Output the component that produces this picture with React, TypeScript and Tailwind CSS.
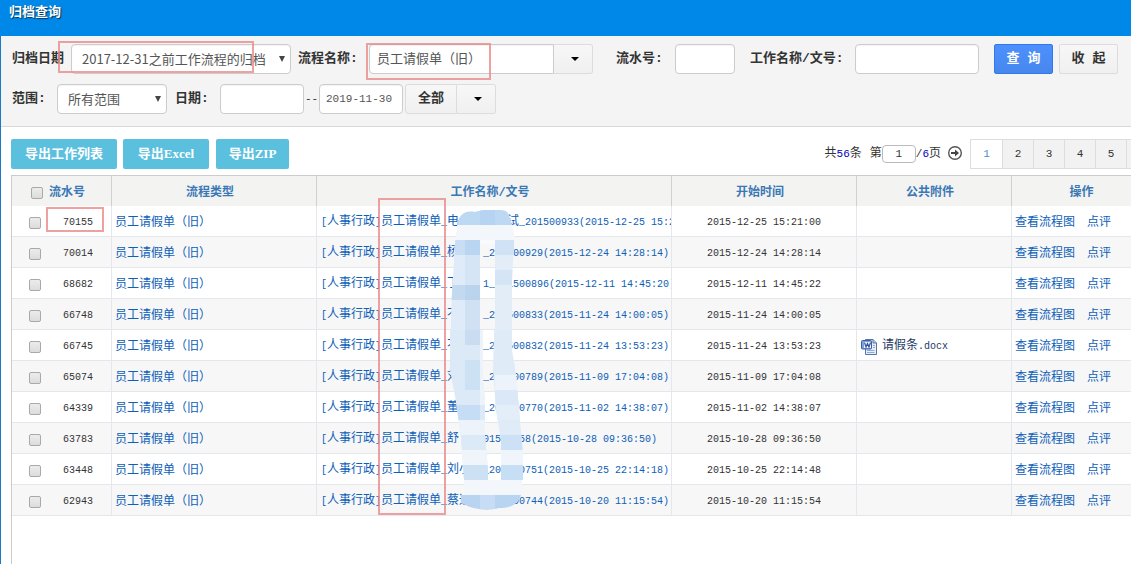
import React from 'react'

interface ArchiveRow {
  id: string
  title: string
  start: string
  file?: string
}

// the wide spaces stand for names hidden by the mosaic
const rows: ArchiveRow[] = [
  { id: '70155', title: '电　　　　试_201500933(2015-12-25 15:21:00)', start: '2015-12-25 15:21:00' },
  { id: '70014', title: '杨　　_201500929(2015-12-24 14:28:14)', start: '2015-12-24 14:28:14' },
  { id: '68682', title: '丁　　1_201500896(2015-12-11 14:45:20)', start: '2015-12-11 14:45:22' },
  { id: '66748', title: '不　　_201500833(2015-11-24 14:00:05)', start: '2015-11-24 14:00:05' },
  { id: '66745', title: '不　　_201500832(2015-11-24 13:53:23)', start: '2015-11-24 13:53:23', file: '请假条.docx' },
  { id: '65074', title: '刘　　_201500789(2015-11-09 17:04:08)', start: '2015-11-09 17:04:08' },
  { id: '64339', title: '董　　_201500770(2015-11-02 14:38:07)', start: '2015-11-02 14:38:07' },
  { id: '63783', title: '舒　_201500658(2015-10-28 09:36:50)', start: '2015-10-28 09:36:50' },
  { id: '63448', title: '刘小　_201500751(2015-10-25 22:14:18)', start: '2015-10-25 22:14:48' },
  { id: '62943', title: '蔡达　_201500744(2015-10-20 11:15:54)', start: '2015-10-20 11:15:54' },
]

const pages = ['1', '2', '3', '4', '5', '6']

const inputClass =
  'h-[30px] shrink-0 rounded-[4px] border border-[#ccc] bg-white text-[#555] shadow-[inset_0_1px_1px_rgba(0,0,0,0.05)] outline-none'
const greyButton =
  'flex h-[30px] shrink-0 items-center justify-center border border-[#dcdcdc] bg-gradient-to-b from-[#f7f7f7] to-[#f0f0f0] font-bold text-[#333]'
const exportButton =
  'h-[30px] rounded-[2px] bg-[#5bc0de] text-center font-["Liberation_Serif","Noto_Sans_CJK_SC",serif] text-[13px] font-bold text-white'
const labelClass = 'shrink-0 whitespace-nowrap font-bold text-[#333]'
const headClass = 'border-r border-[#d0d0d0] pt-[3px] pr-2 font-bold text-[#3a78b5]'
const cellClass = 'border-r border-b border-[#e4e8ec] pt-[3px]'

// Latin characters take half the width of a Chinese one
const Mixed = ({ text }: { text: string }) => (
  <>
    {text.split(/([\x20-\x7e]+)/).map((part, i) =>
      i % 2 ? (
        <span key={i} className="text-[10px]">
          {part}
        </span>
      ) : (
        part
      ),
    )}
  </>
)

const Caret = () => (
  <svg width="8" height="4" viewBox="0 0 8 4" aria-hidden="true">
    <path d="M0 0H8L4 4Z" fill="#000" />
  </svg>
)

const SelectArrow = () => (
  <svg
    className="pointer-events-none absolute top-3 right-1.5"
    width="6"
    height="6"
    viewBox="0 0 6 6"
    aria-hidden="true"
  >
    <path d="M0 0H6L3 6Z" fill="#444" />
  </svg>
)

const Check = ({ label }: { label: string }) => (
  <input
    type="checkbox"
    aria-label={label}
    className="size-3 shrink-0 appearance-none rounded-[2px] border border-[#a9a9a9] bg-gradient-to-b from-[#ececec] to-[#dcdcdc]"
  />
)

const WordIcon = () => (
  <svg width="16" height="16" viewBox="0 0 16 16" aria-hidden="true">
    <path d="M4.5 .5H12L15.500 4V15.500H4.500Z" fill="#e6eefb" stroke="#5574ae" />
    <path d="M12 .5V4H15.500" fill="#b8cbee" stroke="#5574ae" />
    <path d="M6 11.500H13.500M6 13.500H13.500M12 6.500H14M12 8.500H14" stroke="#8fa9d8" />
    <rect x=".5" y="1.500" width="10" height="8.500" rx="1" fill="#7fa0da" stroke="#3c5fa3" />
    <rect x="3" y="3" width="7" height="6" fill="#f4f8ff" />
    <path d="M3.500 3.500L5 8L6.500 4.500L8 8L9.500 3.500" fill="none" stroke="#2f55a0" strokeWidth="1.200" />
  </svg>
)

const Mosaic = () => (
  <svg
    className="pointer-events-none absolute top-[34px] left-[438px]"
    width="80"
    height="302"
    viewBox="450 210 80 302"
    aria-hidden="true"
  >
    <defs>
      <clipPath id="stroke-top">
        <path d="M457 226C458 214 466 210 475 212C484 209 500 209 506 211C510 215 511 222 514 232C515 250 512 265 512 285V330H451C451 300 453 280 454 262C453 250 456 240 457 226Z" />
      </clipPath>
      <clipPath id="stroke-left">
        <path d="M450 300H483V382L485 400V436L488 470V496H464V480L461 436L455 396L450 370Z" />
      </clipPath>
      <clipPath id="stroke-right">
        <path d="M495 300H512V350L516 374L520 420L523 455V480H501V440L496 410L493 370Z" />
      </clipPath>
    </defs>
    <g clipPath="url(#stroke-top)">
      <path d="M450 210H520V225H450Z" fill="#bcd8f3" />
      <path d="M480 210H495V225H480Z" fill="#b6d4f2" />
      <path d="M450 225H520V240H450Z" fill="#f3f7fc" />
      <path d="M450 240H480V330H450Z" fill="#dfebf8" />
      <path d="M465 240H480V255H465Z" fill="#b9d5f1" />
      <path d="M455 240H465V255H455Z" fill="#c9def5" />
      <path d="M465 255H480V285H465Z" fill="#d5e5f6" />
      <path d="M450 285H480V300H450Z" fill="#c3d9ef" />
      <path d="M465 285H480V300H465Z" fill="#bad4ee" />
      <path d="M465 300H480V330H465Z" fill="#cfe1f3" />
      <path d="M495 240H514V330H495Z" fill="#e3edf8" />
      <path d="M495 240H514V255H495Z" fill="#cfe2f6" />
      <path d="M495 270H514V285H495Z" fill="#d6e5f5" />
      <path d="M480 240H495V244H480Z" fill="#f8fafd" />
    </g>
    <g clipPath="url(#stroke-left)">
      <path d="M450 330H490V512H450Z" fill="#dce9f7" />
      <path d="M465 330H480V345H465Z" fill="#c9dcf1" />
      <path d="M465 360H480V390H465Z" fill="#cde1f5" />
      <path d="M480 330H490V405H480Z" fill="#edf3fa" />
      <path d="M455 405H480V420H455Z" fill="#c5def6" />
      <path d="M455 420H490V435H455Z" fill="#edf3fa" />
      <path d="M455 435H490V450H455Z" fill="#dce9f7" />
      <path d="M455 450H490V465H455Z" fill="#eff5fb" />
      <path d="M455 465H490V480H455Z" fill="#cde1f5" />
    </g>
    <g clipPath="url(#stroke-right)">
      <path d="M490 330H525V480H490Z" fill="#e0ebf8" />
      <path d="M495 375H525V390H495Z" fill="#edf3fa" />
      <path d="M495 390H525V405H495Z" fill="#dae8f7" />
      <path d="M495 405H525V420H495Z" fill="#e4eef9" />
      <path d="M495 435H525V450H495Z" fill="#cde1f6" />
      <path d="M495 450H525V465H495Z" fill="#eff5fb" />
      <path d="M495 465H525V480H495Z" fill="#c7dff5" />
    </g>
    <path d="M464 480H522V495H464Z" fill="#f3f7fc" />
    <path d="M461 495H521C518 505 510 508 499 508C485 512 470 508 461 503Z" fill="#b8d4f1" />
    <path d="M480 495H495V509H480Z" fill="#c6ddf5" />
  </svg>
)

const FilterBar = () => (
  <form className="relative flex flex-col gap-2.5 border-b border-[#d9d9d9] bg-[#f4f4f4] pt-2 pb-3 pl-[11px] text-[13px]">
    <div className="flex items-center">
      <label htmlFor="archive" className={`${labelClass} w-[59px]`}>
        归档日期
      </label>
      <div className="relative w-[220px] shrink-0">
        <select
          id="archive"
          className={`${inputClass} w-full appearance-none pr-6 pl-2.5 font-["Noto_Sans_CJK_SC",sans-serif]`}
        >
          <option>2017-12-31之前工作流程的归档表</option>
        </select>
        <SelectArrow />
      </div>
      <label htmlFor="flow" className={`${labelClass} ml-[7px] w-[71px]`}>
        流程名称:
      </label>
      <input
        id="flow"
        defaultValue="员工请假单（旧）"
        className={`${inputClass} w-[185px] rounded-r-none pb-1 pl-[7px]`}
      />
      <button type="button" aria-label="选择流程" className={`${greyButton} w-[39px] rounded-r-[3px] border-l-0 pl-1`}>
        <Caret />
      </button>
      <label htmlFor="serial" className={`${labelClass} ml-[23px] w-[59px]`}>
        流水号:
      </label>
      <input id="serial" className={`${inputClass} w-[60px]`} />
      <label htmlFor="title" className={`${labelClass} ml-[15px] w-[105px]`}>
        工作名称/文号:
      </label>
      <input id="title" className={`${inputClass} w-[124px]`} />
      <button
        type="button"
        className="ml-[15px] h-[30px] w-[59px] shrink-0 rounded-[2px] border border-[#3079ed] bg-gradient-to-b from-[#4d90fe] to-[#4787ed] font-bold text-white"
      >
        查 询
      </button>
      <button type="button" className={`${greyButton} ml-1.5 w-[59px] rounded-[2px]`}>
        收 起
      </button>
    </div>
    <div className="flex items-center">
      <label htmlFor="range" className={`${labelClass} w-[45px]`}>
        范围:
      </label>
      <div className="relative w-[110px] shrink-0">
        <select
          id="range"
          className={`${inputClass} w-full appearance-none pr-6 pl-2.5 font-["Noto_Sans_CJK_SC",sans-serif]`}
        >
          <option>所有范围</option>
        </select>
        <SelectArrow />
      </div>
      <label htmlFor="from" className={`${labelClass} ml-2 w-[45px]`}>
        日期:
      </label>
      <input id="from" className={`${inputClass} w-[84px]`} />
      <span className="w-[15px] shrink-0 text-center text-[11px]">--</span>
      <input
        aria-label="结束日期"
        defaultValue="2019-11-30"
        className={`${inputClass} w-[84px] pl-1.5 text-[11px]`}
      />
      <button type="button" className={`${greyButton} ml-0.5 w-[52px] rounded-l-[3px]`}>
        全部
      </button>
      <button type="button" aria-label="更多日期" className={`${greyButton} w-[39px] rounded-r-[3px] border-l-0 pl-1`}>
        <Caret />
      </button>
    </div>
    <div className="pointer-events-none absolute top-[5px] left-[57px] h-8 w-[196px] border-2 border-[#e88a8a]/80" />
    <div className="pointer-events-none absolute top-[7px] left-[365px] h-[37px] w-[125px] border-2 border-[#e88a8a]/80" />
  </form>
)

const Toolbar = () => (
  <div className="flex h-[30px] items-center pr-0.5">
    <button type="button" className={`${exportButton} w-[106px]`}>
      导出工作列表
    </button>
    <button type="button" className={`${exportButton} ml-1.5 w-[86px]`}>
      导出Excel
    </button>
    <button type="button" className={`${exportButton} ml-[7px] w-[73px]`}>
      导出ZIP
    </button>
    <div className="ml-auto flex items-center">
      <span>
        共<b className="text-[11px] font-normal text-[#0000c0]">56</b>条
      </span>
      <label htmlFor="page" className="ml-2">
        第
      </label>
      <input
        id="page"
        defaultValue="1"
        className="h-[18px] w-[34px] rounded-[4px] border border-[#bbb] text-center text-[11px] outline-none"
      />
      <span className="text-[11px]">
        /<b className="font-normal text-[#0000c0]">6</b>
      </span>
      <span>页</span>
      <button type="button" aria-label="跳转" className="ml-1.5">
        <svg width="16" height="16" viewBox="0 0 16 16" aria-hidden="true">
          <circle cx="8" cy="7" r="6.300" fill="#fff" stroke="#555" strokeWidth="1.400" />
          <path d="M4 6H8V3.500L12 7L8 10.500V8H4Z" fill="#444" />
        </svg>
      </button>
      <nav className="ml-[7px] flex border-l border-[#ddd]">
        {pages.map((page, i) => (
          <a
            key={page}
            href={`#page-${page}`}
            className={`flex h-[30px] items-center justify-center border-y border-r border-[#ddd] text-[11px] ${
              i === 0 ? 'w-8 bg-white text-[#4a90d9]' : 'w-[31px] bg-[#f2f2f2]'
            }`}
          >
            {page}
          </a>
        ))}
      </nav>
    </div>
  </div>
)

const ArchiveTable = () => (
  <div className="relative mt-1.5 flex-1 border-t border-l border-[#ccc]">
    <table className="w-full table-fixed border-separate border-spacing-0">
      <colgroup>
        <col className="w-[100px]" />
        <col className="w-[205px]" />
        <col className="w-[355px]" />
        <col className="w-[185px]" />
        <col className="w-[155px]" />
        <col />
      </colgroup>
      <thead>
        <tr className="h-[30px] bg-[#f3f3f2]">
          <th className={headClass}>
            <div className="flex items-center gap-1.5 pl-[19px]">
              <Check label="全选" />
              流水号
            </div>
          </th>
          <th className={headClass}>流程类型</th>
          <th className={headClass}>工作名称/文号</th>
          <th className={headClass}>开始时间</th>
          <th className={headClass}>公共附件</th>
          <th className={headClass}>操作</th>
        </tr>
      </thead>
      <tbody>
        {rows.map((row) => (
          <tr key={row.id} className="h-[31px] even:bg-[#f7f7f7]">
            <td className={cellClass}>
              <div className="flex items-center justify-between pr-[18px] pl-[17px]">
                <Check label={row.id} />
                <span className="text-[10px]">{row.id}</span>
              </div>
            </td>
            <td className={`${cellClass} pl-[3px]`}>
              <a href={`#type-${row.id}`} className="text-[#0d60b8]">
                员工请假单（旧）
              </a>
            </td>
            <td className={`${cellClass} overflow-hidden pl-1 whitespace-pre`}>
              <a href={`#work-${row.id}`} className="text-[#0d60b8]">
                <Mixed text={`[人事行政]员工请假单_${row.title}`} />
              </a>
            </td>
            <td className={`${cellClass} text-center text-[10px]`}>{row.start}</td>
            <td className={`${cellClass} pl-1`}>
              {row.file && (
                <a href={`#file-${row.id}`} className="flex items-center gap-[5px] text-[#1b3a66]">
                  <WordIcon />
                  <span>
                    <Mixed text={row.file} />
                  </span>
                </a>
              )}
            </td>
            <td className={`${cellClass} pl-[3px]`}>
              <div className="flex gap-3 text-[#0d60b8]">
                <a href={`#chart-${row.id}`}>查看流程图</a>
                <a href={`#review-${row.id}`}>点评</a>
              </div>
            </td>
          </tr>
        ))}
      </tbody>
    </table>
    <Mosaic />
    <div className="pointer-events-none absolute top-[31px] left-[34px] h-[25px] w-[58px] border-2 border-[#e88a8a]/80" />
    <div className="pointer-events-none absolute top-[22px] left-[366px] h-[317px] w-[68px] border-2 border-[#e88a8a]/80" />
  </div>
)

export default function App() {
  return (
    <div className='flex min-h-screen flex-col bg-white font-["Liberation_Mono","Noto_Sans_CJK_SC",monospace] text-[12px] leading-[18px] text-[#333]'>
      <header className="h-9 bg-[#0088e8] pt-1 pl-[9px]">
        <h1 className="text-[13px] font-bold text-white [text-shadow:1px_1px_1px_rgba(0,0,0,0.6)]">归档查询</h1>
      </header>
      <main className="flex flex-1 flex-col overflow-hidden border-l border-[#1a7ac8]">
        <FilterBar />
        <section className="flex min-w-[1159px] flex-1 flex-col pt-3 pl-2.5">
          <Toolbar />
          <ArchiveTable />
        </section>
      </main>
    </div>
  )
}
